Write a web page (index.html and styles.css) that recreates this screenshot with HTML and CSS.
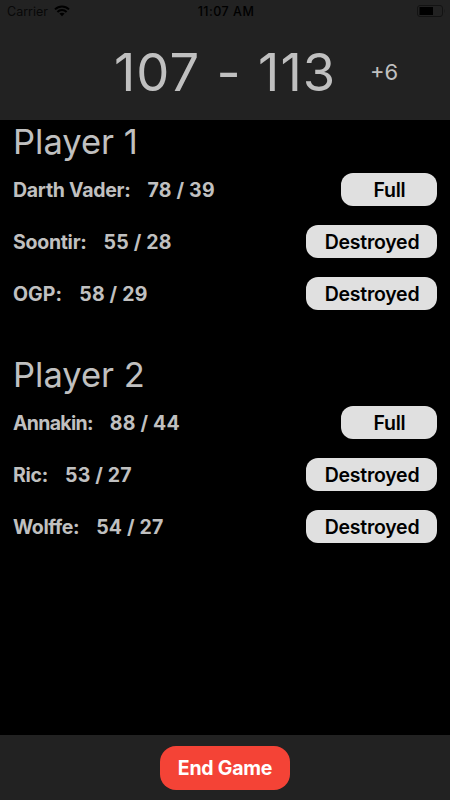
FILE: index.html
```html
<!DOCTYPE html>
<html lang="en">
<head>
<meta charset="utf-8">
<title>Score</title>
<link rel="stylesheet" href="styles.css">
</head>
<body>
<header class="header">
  <div class="status">
    <div class="status-left">
      <span class="carrier">Carrier</span>
      <svg class="wifi" width="16" height="12" viewBox="0 0 16 12" fill="none" stroke="#000" stroke-width="2"><path d="M1 4.400C5 .4 11 .4 15 4.400M3.400 7C6 4.300 10 4.300 12.600 7"/><path d="M8 11.200 5.400 8.600C6.800 7.300 9.200 7.300 10.600 8.600Z" fill="#000" stroke="none"/></svg>
    </div>
    <span class="time">11:07 AM</span>
    <svg class="battery" width="28" height="12" viewBox="0 0 28 12"><rect x=".5" y=".5" width="25" height="11" rx="2.500" fill="none" stroke="#131313"/><rect x="2.500" y="2" width="13.500" height="8" fill="#000"/><path d="M27 4q1 2 0 4z" fill="#131313"/></svg>
  </div>
  <div class="scoreboard">
    <span></span>
    <span class="score">107 - 113</span>
    <span class="margin">+6</span>
  </div>
</header>
<main class="players">
  <section class="player">
    <h1 class="player-name">Player 1</h1>
    <div class="ship"><span class="name">Darth Vader:</span><span class="points">78 / 39</span><button class="state full">Full</button></div>
    <div class="ship"><span class="name">Soontir:</span><span class="points">55 / 28</span><button class="state">Destroyed</button></div>
    <div class="ship"><span class="name loose">OGP:</span><span class="points">58 / 29</span><button class="state">Destroyed</button></div>
  </section>
  <section class="player">
    <h1 class="player-name">Player 2</h1>
    <div class="ship"><span class="name tight">Annakin:</span><span class="points">88 / 44</span><button class="state full">Full</button></div>
    <div class="ship"><span class="name">Ric:</span><span class="points">53 / 27</span><button class="state">Destroyed</button></div>
    <div class="ship"><span class="name snug">Wolffe:</span><span class="points">54 / 27</span><button class="state">Destroyed</button></div>
  </section>
</main>
<footer class="footer"><button class="end">End Game</button></footer>
</body>
</html>
```
FILE: styles.css
```css
* { box-sizing: border-box; }
body {
  margin: 0;
  height: 800px;
  display: flex;
  flex-direction: column;
  background: #000;
  color: #c0c0c0;
  font-family: Inter, "Liberation Sans", sans-serif;
  overflow: hidden;
}
button { border: 0; padding: 0; font: inherit; }
.header { height: 120px; background: #222; }
.status {
  height: 24px;
  padding: 0 5px 1px 7px;
  display: grid;
  grid-template-columns: 1fr auto 1fr;
  align-items: center;
  color: #000;
  font-size: 13px;
  line-height: 23px;
}
.status-left { display: flex; align-items: center; gap: 6px; }
.carrier { color: #080808; font-size: 12.5px; }
.wifi { display: block; margin-top: -1px; }
.time { font-weight: 500; font-size: 12.5px; letter-spacing: .5px; }
.battery { justify-self: end; margin-top: -1px; }
.scoreboard {
  height: 96px;
  display: grid;
  grid-template-columns: 114px 256px 1fr;
  align-items: center;
}
.score { font-size: 52.5px; line-height: 96px; letter-spacing: 1px; word-spacing: .6px; white-space: nowrap; }
.margin { font-size: 22px; }
.players { flex: 1; padding: 0 13px; }
.player { height: 233px; }
.player-name {
  height: 43px;
  margin: 0;
  font-size: 34.5px;
  font-weight: 400;
  line-height: 44px;
}
.ship {
  height: 52px;
  display: flex;
  align-items: center;
  font-size: 19.5px;
  font-weight: 700;
}
.name, .points { padding-top: 1px; }
.name { letter-spacing: -.27px; }
.loose { letter-spacing: .1px; }
.snug { letter-spacing: -.4px; }
.tight { letter-spacing: -.7px; }
.points { margin-left: 17px; letter-spacing: .2px; }
.state {
  margin-left: auto;
  width: 131px;
  height: 33px;
  border-radius: 12px;
  background: #e0e0e0;
  color: #000;
  font-weight: 600;
  letter-spacing: -.25px;
  line-height: 33px;
  padding: 1px 0 0 1px;
}
.full { width: 96px; }
.footer {
  height: 65px;
  background: #222;
  display: flex;
  justify-content: center;
  align-items: center;
}
.end {
  width: 130px;
  height: 44px;
  border-radius: 16px;
  background: #f44336;
  color: #fff;
  font-size: 19.5px;
  font-weight: 700;
  letter-spacing: -.25px;
}
```
